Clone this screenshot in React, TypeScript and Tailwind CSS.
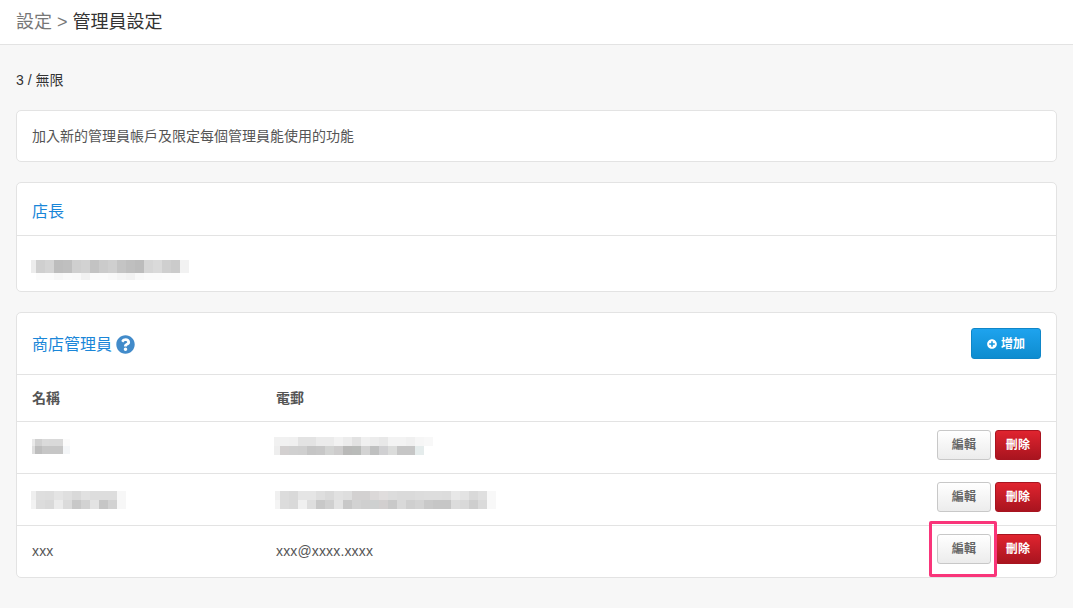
import { FaPlusCircle, FaQuestionCircle } from 'react-icons/fa'

const font = '"Liberation Sans", "Noto Sans CJK TC", sans-serif'

interface MosaicRow {
    h: number
    cells: string[]
}

// blurred out account data, drawn as blocks
function Mosaic({ first, size = 9, rows, className }: { first: number; size?: number; rows: MosaicRow[]; className?: string }) {
    return (
        <div className={`flex flex-col ${className ?? ''}`}>
            {rows.map((row, r) => (
                <div key={r} className="flex" style={{ height: row.h }}>
                    {row.cells.map((c, i) => (
                        <div key={i} style={{ width: i === 0 ? first : size, backgroundColor: '#' + c }} />
                    ))}
                </div>
            ))}
        </div>
    )
}

const ownerRows: MosaicRow[] = [
    { h: 13, cells: ['ececec', 'cfcfcf', 'd4d4d4', 'bdbdbd', 'bfbfbf', 'cfcfcf', 'd2d2d2', 'c3c3c3', 'cbcbcb', 'cfcfcf', 'c4c4c4', 'bfbfbf', 'bcbcbc', 'd6d6d6', 'dadada', 'cfcfcf', 'cbcbcb', 'f2f2f2'] },
    { h: 7, cells: ['ffffff', 'fbfbfb', 'fbfbfb', 'f7f7f7', 'fafafa', 'f9f9f9', 'f2f2f2', 'fbfbfb', 'fbfbfb', 'f9f9f9', 'f5f5f5', 'f2f2f2', 'f9f9f9', 'fbfbfb', 'fbfbfb', 'fcfcfc', 'fcfcfc', 'ffffff'] },
]

const rowOne = {
    name: [
        { h: 7, cells: ['e9e9e9', 'd0d0d0', 'dadada', 'd9d9d9', 'd9d9d9', 'fbfbfb'] },
        { h: 8, cells: ['dedede', 'bdbdbd', 'c6c6c6', 'c6c6c6', 'c6c6c6', 'f4f6f8'] },
    ],
    email: [
        { h: 9, cells: ['f1f1f1', 'f1f1f1', 'f0f0f0', 'e3e3e3', 'e3e3e3', 'ebebeb', 'ebebeb', 'f2f2f2', 'ececec', 'e2e2e2', 'f0f0f0', 'ececec', 'e8e8e8', 'f3f3f3', 'f3f3f3', 'f0f0f0', 'f6f6f6', 'f8f8f8'] },
        { h: 9, cells: ['eeeeee', 'd3d0d0', 'd0d0d0', 'cfcfcf', 'c5c5c5', 'c7c7c7', 'd2d3d2', 'cdcccc', 'b9b9b8', 'b9bbb9', 'd3d3d3', 'bfc0c0', 'd0d0d2', 'dbdcdb', 'c6c6c6', 'c6c6c6', 'e5ecec', 'ffffff'] },
    ],
}

const rowTwo = {
    name: [
        { h: 9, cells: ['eeeeee', 'dedede', 'dddddd', 'e4e4e4', 'dfdfdf', 'd9d9d9', 'e1e1e1', 'dddddd', 'dddddd', 'dddddd', 'f7f7f7'] },
        { h: 9, cells: ['f2f2f2', 'dcdcdc', 'd9d9d9', 'ebebeb', 'dbdbdb', 'c8c8c8', 'd2d2d2', 'e3e3e3', 'c6c6c6', 'd2d2d2', 'f7f7f7'] },
    ],
    email: [
        { h: 9, cells: ['f0f0f0', 'dcdcdc', 'd9d9d9', 'e5e5e5', 'e5e5e5', 'dedede', 'd9d9d9', 'e1e1e1', 'dedede', 'd3d1d1', 'd3d1d1', 'dbd8d8', 'e0dddd', 'dcdcdc', 'dadada', 'dadada', 'dcdcdc', 'dddddd', 'dddddd', 'dcdcdc', 'e8e8e8', 'e3e3e3', 'd9d9d9', 'dfdfdf', 'f8f8f8'] },
        { h: 9, cells: ['f4f4f4', 'dcdcdc', 'd9d9d9', 'f0f0f0', 'dedede', 'c8c8c8', 'd0d0d0', 'e3e3e3', 'c8c8c8', 'd2d2d2', 'cfcfcf', 'ced0d0', 'd2cfcf', 'c9c9c9', 'd9d9d9', 'cfcfcf', 'd3d3d3', 'c9c9c9', 'c6c6c6', 'c6c6c6', 'dcdcdc', 'd9d9d9', 'cecece', 'dadada', 'f8f8f8'] },
    ],
}

function ActionButtons({ highlight }: { highlight?: boolean }) {
    return (
        <div className="flex gap-1 self-start mt-2">
            <div className="relative">
                <button className="block w-[54px] h-[30px] rounded-[3px] border border-[#c8c8c8] bg-gradient-to-b from-white to-[#ececec] text-xs font-bold text-[#666]">
                    編輯
                </button>
                {highlight && (
                    <div className="absolute -left-2 -right-1.5 -top-[13px] -bottom-[13px] border-[3px] border-[#f9357a] rounded-[2px]" />
                )}
            </div>
            <button className="w-[46px] h-[30px] rounded-[3px] border border-[#a81420] bg-gradient-to-b from-[#e0242f] to-[#a9141f] text-xs font-bold text-white">
                刪除
            </button>
        </div>
    )
}

function Row({ children, actions, last }: { children: React.ReactNode[]; actions: React.ReactNode; last?: boolean }) {
    return (
        <div className={`flex items-center pl-[15px] pr-[15px] text-sm text-[#555] tracking-[0.15px] ${last ? 'h-[51px]' : 'h-[52px] border-b border-[#e3e3e3]'}`}>
            <div className="w-[244px] pb-[2px]">{children[0]}</div>
            <div className="flex-1 pb-[2px]">{children[1]}</div>
            {actions}
        </div>
    )
}

export default function App() {
    return (
        <div className="min-h-[608px] bg-[#f7f7f7]" style={{ fontFamily: font }}>
            <div className="h-[45px] bg-white border-b border-[#e3e3e3] px-4 flex items-center text-lg">
                <span className="text-[#777]">設定 &gt;&nbsp;</span>
                <span className="text-[#333]">管理員設定</span>
            </div>
            <div className="px-4 pt-[25px]">
                <div className="h-[20px] text-sm leading-5 text-[#333]">3 / 無限</div>
                <div className="mt-5 h-[52px] bg-white border border-[#e3e3e3] rounded-[5px] px-[15px] flex items-center text-sm text-[#555]">
                    加入新的管理員帳戶及限定每個管理員能使用的功能
                </div>
                <div className="mt-5 h-[110px] bg-white border border-[#e3e3e3] rounded-[5px]">
                    <div className="h-[53px] px-[15px] pt-[6px] flex items-center border-b border-[#e3e3e3] text-base text-[#1a86d8]">
                        店長
                    </div>
                    <div className="h-[55px] pl-[14px] pt-3 flex items-center">
                        <Mosaic first={5} rows={ownerRows} />
                    </div>
                </div>
                <div className="mt-5 bg-white border border-[#e3e3e3] rounded-[5px]">
                    <div className="h-[62px] pl-[15px] pr-[15px] flex items-center justify-between border-b border-[#e3e3e3]">
                        <div className="flex items-center gap-1 text-base text-[#1a86d8] mt-[2px]">
                            商店管理員
                            <FaQuestionCircle className="w-[19px] h-[19px] text-[#428bca]" />
                        </div>
                        <button className="w-[70px] h-[31px] rounded-[3px] border border-[#0f86c8] bg-gradient-to-b from-[#1ea3ee] to-[#0d8ccf] text-xs font-bold text-white flex items-center justify-center gap-1">
                            <FaPlusCircle className="w-[10px] h-[10px]" />
                            增加
                        </button>
                    </div>
                    <div className="flex items-center h-[47px] pl-[15px] text-sm font-bold text-[#555] border-b border-[#e3e3e3]">
                        <div className="w-[244px]">名稱</div>
                        <div>電郵</div>
                    </div>
                    <Row actions={<ActionButtons />}>
                        {[
                            <Mosaic key="n" first={3} size={7} rows={rowOne.name} />,
                            <Mosaic key="e" first={6} rows={rowOne.email} className="-ml-[2px] -mt-[2px]" />,
                        ]}
                    </Row>
                    <Row actions={<ActionButtons />}>
                        {[
                            <Mosaic key="n" first={5} rows={rowTwo.name} className="-ml-px mt-[2px]" />,
                            <Mosaic key="e" first={5} rows={rowTwo.email} className="-ml-px mt-[2px]" />,
                        ]}
                    </Row>
                    <Row last actions={<ActionButtons highlight />}>
                        {['xxx', 'xxx@xxxx.xxxx']}
                    </Row>
                </div>
            </div>
        </div>
    )
}
